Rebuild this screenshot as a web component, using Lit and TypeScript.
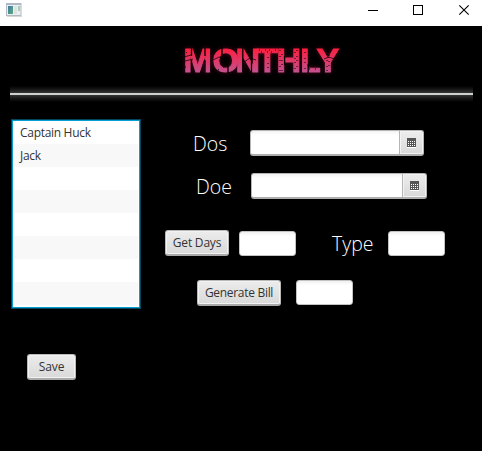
import { LitElement, html, css, svg } from "lit";
import { customElement, property } from "lit/decorators.js";

@customElement("date-field")
class DateField extends LitElement {
  static styles = css`
    :host { display: flex; box-sizing: border-box; height: 26px; border: 1px solid #b5b5b5; border-bottom: 2px solid #aeaeae; border-radius: 3px; background: #b5b5b5; overflow: hidden; }
    .input { flex: 1; background: linear-gradient(#f3f3f3, #fff 4px); border-radius: 1px 0 0 1px; }
    .button { width: 23px; box-sizing: border-box; margin-left: 1px; border: 1px solid #f3f3f3; background: linear-gradient(#ececec, #dadada); display: flex; justify-content: center; align-items: center; }
    .icon { display: block; width: 9px; height: 10px; margin-bottom: -1px; }
  `;
  render() {
    const dots = [3, 5, 7].flatMap((y) => [1, 3, 5, 7].map((x) => svg`<rect x=${x} y=${y} width="1" height="1" fill="#fff"/>`));
    return html`<div class="input"></div>
      <div class="button">
        <svg class="icon" viewBox="0 0 9 10" shape-rendering="crispEdges">
          <rect y="9" width="9" height="1" fill="#fff" />
          <rect width="9" height="9" fill="#555" />${dots}
        </svg>
      </div>`;
  }
}

@customElement("app-title")
class AppTitle extends LitElement {
  static styles = css`
    :host { display: block; }
    .art { display: block; width: 170px; height: 40px; }
    .word { font: bold 34px "Liberation Sans", Arial, sans-serif; filter: drop-shadow(0 0 2px #a0103a88); }
  `;
  render() {
    return html`<svg class="art" viewBox="0 0 170 40">
      <defs>
        <linearGradient id="ink" gradientUnits="userSpaceOnUse" x1="0" y1="8" x2="0" y2="32">
          <stop offset="0" stop-color="#ff1d3c" />
          <stop offset="1" stop-color="#c4518f" />
        </linearGradient>
      </defs>
      <text class="word" x="8.4 37.6 60.6 82 101.6 125 141.4" y="31.7" fill="url(#ink)" stroke="url(#ink)" stroke-width="1">MONTHLY</text>
      <g stroke="#000" fill="none">
        <path stroke-width="1.3" d="M16.5 8v8M16.5 20v13M30 8v8M30 20v13M47 6v9M53 25v9M67.8 7v26M76.5 7v26M109.6 16v9M133.2 24v9M126 7v26" />
        <path stroke-width=".7" d="M9 17l7-2M10 21l8-2M38 20l6-3 4 1M69 22l6-4 6 2M149 19l5-2 5 2" />
        <path stroke-width="1" stroke-dasharray="1 5 1 3" d="M84 10h17M86 12h15M93 17v14M105 10v21M107 14v17M120 12v20M122 10v20M130 12v19M134 29h9M152 20v12M154 15v14M43 30l9-4M10 27h6M11 12l4 4M148 9l6 9" />
      </g>
    </svg>`;
  }
}

@customElement("app-root")
class AppRoot extends LitElement {
  @property({ type: Array }) names = ["Captain Huck", "Jack", "", "", "", "", "", ""];
  static styles = css`
    :host { display: flex; flex-direction: column; width: 482px; height: 451px; background: #000; overflow: hidden; font: 12px "Open Sans", "Noto Sans", sans-serif; color: #333; }
    .titlebar { height: 26px; background: #fff; display: flex; justify-content: space-between; flex: none; }
    .appicon { display: block; margin: 3px 0 0 6px; width: 16px; height: 14px; }
    .controls { display: block; width: 114px; height: 20px; }
    .title { margin: 14px 0 0 175px; }
    .divider { margin: 4px 9px 0 10px; height: 20px; background: linear-gradient(#000 2px, #1a1a1a 6px, #363636 9px, #cdd1cd 9px 11px, #363636 11px, #1a1a1a 14px, #000 18px); }
    .main { display: flex; margin: 15px 0 0 11px; }
    .list { width: 130px; height: 190px; box-sizing: border-box; border: 1px solid #02455c; background: #fff; outline: 1px solid #039ed3; outline-offset: -2px; padding: 1px 2px 3px; flex: none; }
    .row { height: 23px; line-height: 24px; padding-left: 6px; letter-spacing: -0.3px; }
    .row:nth-child(even) { background: #f8f8f8; }
    .form { flex: 1; display: flex; flex-direction: column; padding-top: 11px; }
    .line { display: flex; align-items: flex-start; height: 26px; }
    .dos { padding-left: 52px; }
    .doe { padding-left: 55px; margin-top: 17px; }
    .days { padding-left: 24px; margin-top: 31px; }
    .bill { padding-left: 56px; margin-top: 24px; }
    .label { color: #fff; font-size: 19.5px; font-weight: 350; line-height: 28px; flex: none; white-space: nowrap; }
    .dos .label { width: 57px; }
    .doe .label { width: 55px; }
    .days .label { width: 56px; margin-left: 36px; }
    .dos date-field { width: 174px; }
    .doe date-field { width: 176px; }
    .btn { font: inherit; letter-spacing: -0.3px; color: #333; height: 26px; box-sizing: border-box; padding: 0; border: 1px solid #b9b9b9; border-bottom: 2px solid #a9a9a9; border-radius: 3px; background: linear-gradient(#ececec, #d9d9d9); box-shadow: inset 0 0 0 1px #f2f2f2; flex: none; }
    .get { letter-spacing: -0.2px; width: 64px; margin-right: 10px; }
    .gen { width: 84px; margin-right: 15px; }
    .save { width: 49px; margin: 45px 0 0 27px; letter-spacing: -0.1px; }
    .box { width: 57px; height: 25px; box-sizing: border-box; border: 1px solid #c2c2c2; border-radius: 3px; background: linear-gradient(#f0f0f0, #fff 4px); }
    .days .box { margin-top: 1px; }
  `;
  render() {
    return html`
      <header class="titlebar">
        <svg class="appicon" viewBox="0 0 16 14">
          <defs><linearGradient id="g" x2="1" y2="1"><stop stop-color="#4278a8" /><stop offset="1" stop-color="#58ad78" /></linearGradient></defs>
          <rect x=".5" y=".5" width="14.5" height="12" fill="#edf0f1" stroke="#b4bac3" />
          <path d="M0 1h15" stroke="#aeb8c7" stroke-width="2" />
          <rect x="2" y="3" width="5" height="8" fill="url(#g)" />
          <rect x="8" y="3" width="3" height="8" fill="#e0e2e2" />
          <rect x="12" y="3" width="2" height="5" fill="#9fcfc0" />
          <path d="M1 13.5h15" stroke="#ddd5cf" />
        </svg>
        <svg class="controls" viewBox="0 0 114 20" fill="none" stroke="#000">
          <path d="M0 10.5h10M45.5 5.5h9v9h-9z" shape-rendering="crispEdges" />
          <path d="M91.3 5.3l9.4 9.4M100.7 5.3l-9.4 9.4" stroke-width="1.1" />
        </svg>
      </header>
      <app-title class="title"></app-title>
      <div class="divider"></div>
      <main class="main">
        <div class="list">${this.names.map((n) => html`<div class="row">${n}</div>`)}</div>
        <div class="form">
          <div class="line dos"><span class="label">Dos</span><date-field></date-field></div>
          <div class="line doe"><span class="label">Doe</span><date-field></date-field></div>
          <div class="line days"><button class="btn get">Get Days</button><div class="box"></div><span class="label">Type</span><div class="box"></div></div>
          <div class="line bill"><button class="btn gen">Generate Bill</button><div class="box"></div></div>
        </div>
      </main>
      <button class="btn save">Save</button>
    `;
  }
}
